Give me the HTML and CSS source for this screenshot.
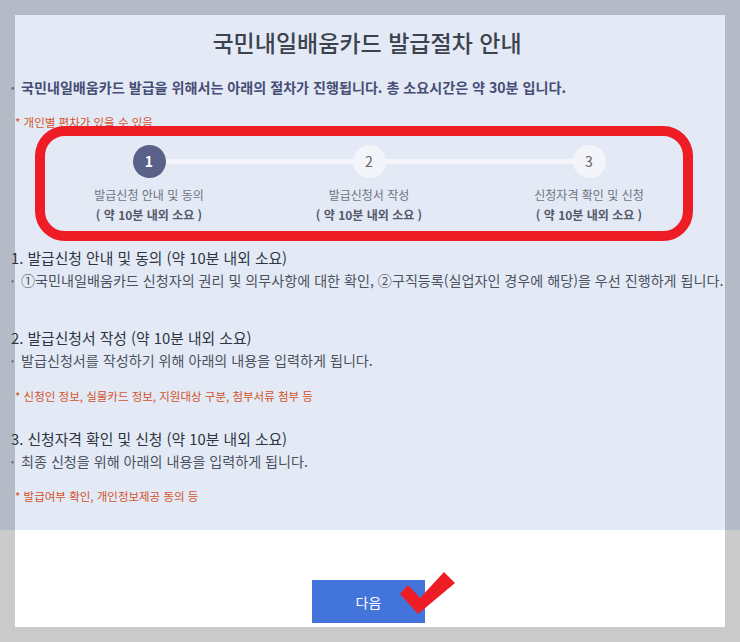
FILE: index.html
```html
<!DOCTYPE html>
<html lang="ko">
<head>
    <meta charset="UTF-8">
    <meta name="viewport" content="width=device-width, initial-scale=1.0">
    <title>국민내일배움카드 발급절차 안내</title>
    <link rel="stylesheet" href="styles.css">
</head>
<body>

<div class="screen">
    <div class="dim"></div>

    <div class="modal">
        <h2 class="title">국민내일배움카드 발급절차 안내</h2>

        <p class="bullet intro">국민내일배움카드 발급을 위해서는 아래의 절차가 진행됩니다. 총 소요시간은 약 30분 입니다.</p>
        <p class="note note-top">* 개인별 편차가 있을 수 있음</p>

        <div class="steps">
            <div class="step active">
                <span class="step-num">1</span>
                <span class="step-name">발급신청 안내 및 동의</span>
                <span class="step-time">( 약 10분 내외 소요 )</span>
            </div>
            <div class="step">
                <span class="step-num">2</span>
                <span class="step-name">발급신청서 작성</span>
                <span class="step-time">( 약 10분 내외 소요 )</span>
            </div>
            <div class="step">
                <span class="step-num">3</span>
                <span class="step-name">신청자격 확인 및 신청</span>
                <span class="step-time">( 약 10분 내외 소요 )</span>
            </div>
        </div>

        <h3 class="section-title first">1. 발급신청 안내 및 동의 (약 10분 내외 소요)</h3>
        <p class="bullet">①국민내일배움카드 신청자의 권리 및 의무사항에 대한 확인, ②구직등록(실업자인 경우에 해당)을 우선 진행하게 됩니다.</p>

        <h3 class="section-title second">2. 발급신청서 작성 (약 10분 내외 소요)</h3>
        <p class="bullet">발급신청서를 작성하기 위해 아래의 내용을 입력하게 됩니다.</p>
        <p class="note">* 신청인 정보, 실물카드 정보, 지원대상 구분, 첨부서류 첨부 등</p>

        <h3 class="section-title">3. 신청자격 확인 및 신청 (약 10분 내외 소요)</h3>
        <p class="bullet">최종 신청을 위해 아래의 내용을 입력하게 됩니다.</p>
        <p class="note note-last">* 발급여부 확인, 개인정보제공 동의 등</p>

        <div class="actions">
            <button type="button" class="btn-next">다음</button>
        </div>
    </div>

    <!-- 안내용 강조 표시 -->
    <div class="mark-box"></div>
    <svg class="mark-check" width="60" height="46" viewBox="0 0 60 46">
        <polygon points="8,14 20,27 44,1 55,12 18,43 0,23" fill="#ee1c25"/>
    </svg>
</div>

</body>
</html>
```

FILE: styles.css
```css
body {
    margin: 0;
    background: #cbcbcb;
    font-family: "Noto Sans CJK KR", "Noto Sans", sans-serif;
}
.screen {
    position: relative;
    width: 740px;
    height: 642px;
    padding: 15px;
    box-sizing: border-box;
    overflow: hidden;
}
.dim {
    position: absolute;
    top: 0;
    left: 0;
    right: 0;
    height: 530px;
    background: rgba(0, 64, 173, 0.11);
    z-index: 1;
    pointer-events: none;
}
.modal {
    background: #fff;
    height: 612px;
    display: flex;
    flex-direction: column;
    padding-top: 12px;
    box-sizing: border-box;
    color: #555;
}
.title {
    font-size: 23px;
    line-height: 30px;
    font-weight: 500;
    color: #444;
    text-align: center;
    margin: 0;
    padding-right: 6px;
}
.bullet {
    font-size: 14.1px;
    line-height: 20px;
    margin: 1px 0 0 -4px;
    white-space: nowrap;
    color: #555;
}
.bullet::before {
    content: "•";
    display: inline-block;
    width: 10px;
    font-size: 9px;
    color: #777;
    vertical-align: 2px;
}
.intro {
    margin-top: 20px;
    font-weight: 700;
    color: #505070;
}
.note {
    font-size: 11.5px;
    line-height: 16px;
    color: #ee5511;
    margin: 17px 0 0 0;
}
.note-top {
    margin-top: 16px;
}
.note-last {
    margin-top: 16px;
}
.steps {
    position: relative;
    z-index: 2;
    display: grid;
    grid-template-columns: repeat(3, 1fr);
    margin: 15px 26px 0 24px;
}
.step {
    position: relative;
    display: flex;
    flex-direction: column;
    align-items: center;
}
.step + .step::before {
    content: "";
    position: absolute;
    top: 14px;
    right: 50%;
    width: 100%;
    height: 5px;
    background: #f3f5fa;
    z-index: -1;
}
.step-num {
    width: 33px;
    height: 33px;
    border-radius: 50%;
    background: #f3f5fa;
    color: #666;
    font-size: 14px;
    line-height: 33px;
    text-align: center;
}
.step.active .step-num {
    background: #5a6188;
    color: #fff;
    font-weight: 700;
}
.step-name {
    margin-top: 8px;
    font-size: 12px;
    line-height: 18px;
    color: #707380;
}
.step-time {
    margin-top: 1px;
    font-size: 12px;
    line-height: 20px;
    font-weight: 700;
    color: #555869;
}
.section-title {
    font-size: 14.8px;
    line-height: 22px;
    font-weight: 400;
    color: #333;
    margin: 24px 0 0 -4px;
}
.section-title.first {
    margin-top: 22px;
}
.section-title.second {
    margin-top: 36px;
}
.actions {
    margin-top: auto;
    padding-bottom: 4px;
    display: flex;
    justify-content: center;
}
.btn-next {
    width: 113px;
    height: 43px;
    margin-right: 3px;
    border: none;
    background: #4274dc;
    color: #fff;
    font-family: inherit;
    font-size: 14px;
}
.mark-box {
    position: absolute;
    left: 35px;
    top: 126px;
    width: 658px;
    height: 115px;
    box-sizing: border-box;
    border: 10px solid #ee1c25;
    border-radius: 30px;
    z-index: 3;
}
.mark-check {
    position: absolute;
    left: 400px;
    top: 571px;
    z-index: 3;
}
```
